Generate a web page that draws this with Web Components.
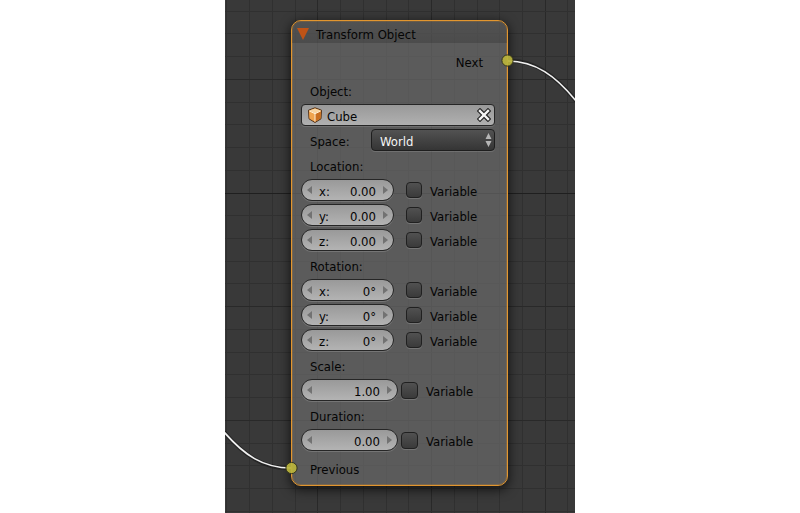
<!DOCTYPE html>
<html lang="en">
<head>
<meta charset="utf-8">
<title>Transform Object</title>
<style>
  html, body { margin: 0; background: #fff; }
  body { font: 13px/22px "DejaVu Sans Condensed", "DejaVu Sans", sans-serif; color: #050505; }
</style>
</head>
<body>
<node-editor>
  <node-panel heading="Transform Object">
    <node-socket side="right">Next</node-socket>
    <object-picker caption="Object:" value="Cube"></object-picker>
    <enum-field caption="Space:" options="World,Local"></enum-field>
    <field-group caption="Location:">
      <number-row axis="x:" value="0.00"></number-row>
      <number-row axis="y:" value="0.00"></number-row>
      <number-row axis="z:" value="0.00"></number-row>
    </field-group>
    <field-group caption="Rotation:">
      <number-row axis="x:" value="0°"></number-row>
      <number-row axis="y:" value="0°"></number-row>
      <number-row axis="z:" value="0°"></number-row>
    </field-group>
    <field-group caption="Scale:">
      <number-row wide name="Scale" value="1.00"></number-row>
    </field-group>
    <field-group caption="Duration:">
      <number-row wide name="Duration" value="0.00"></number-row>
    </field-group>
    <node-socket side="left">Previous</node-socket>
  </node-panel>
</node-editor>

<script>
const shared = `
  * { box-sizing: border-box; }
  button, input, select { font: inherit; color: inherit; margin: 0; padding: 0; border: 0; background: none; outline: none; min-width: 0; }
  .caption { display: block; padding: 2px 0 0 9px; height: 22px; }
`;

class Base extends HTMLElement {
  connectedCallback() {
    if (this.shadowRoot) return;
    this.attachShadow({ mode: 'open' }).innerHTML = `<style>${shared}</style>` + this.render();
  }
  attr(name) { return this.getAttribute(name) || ''; }
}

customElements.define('node-editor', class extends Base {
  render() {
    const xs = [1, 24, 47, 70, 92, 115, 138, 161, 183, 206, 229, 252, 274, 297, 320, 342];
    const ys = [11, 33, 56, 79, 102, 124, 147, 170, 193, 215, 238, 261, 283, 306, 329, 352, 374, 397, 420, 443, 465, 488, 511];
    const majorX = [92, 206, 320], majorY = [79, 306, 420];
    const col = (v, major) => major.includes(v) ? '#292929' : '#303030';
    const lines = xs.map(x => `<path stroke="${col(x, majorX)}" d="M${x}.5 0V600"/>`)
      .concat(ys.map(y => `<path stroke="${y === 193 ? '#1f1f1f' : col(y, majorY)}" d="M0 ${y}.5H350"/>`)).join('');
    return `<style>
      :host { display: block; position: relative; overflow: hidden; width: min(100%, 350px); min-height: 100vh; margin: 0 auto;
              padding: 20px 67px 27px 66px; box-sizing: border-box; background: #393939; }
      svg { position: absolute; inset: 0; width: 100%; height: 100%; pointer-events: none; }
    </style>
    <svg aria-hidden="true">${lines}</svg>
    <slot></slot>
    <svg aria-hidden="true" fill="none">
      <g stroke="#1c1c1c" stroke-width="4" stroke-opacity=".7"><path d="M287 61C310 61 331 76 351 101"/><path d="M-1 432C19 455 38 468 62 468"/></g>
      <g stroke="#f0f0f0" stroke-width="1.7"><path d="M283 61C310 61 331 76 351 101"/><path d="M-1 432C19 455 38 468 66 468"/></g>
      <g fill="#b9b43c" fill-opacity=".93" stroke="#34341c"><circle cx="282.5" cy="60.5" r="5.6"/><circle cx="66.5" cy="468" r="5.6"/></g>
    </svg>`;
  }
});

customElements.define('node-panel', class extends Base {
  render() {
    return `<style>
      :host { display: block; position: relative; border: 1px solid #e2962f; border-radius: 10px; background-clip: padding-box;
              background-color: rgba(105, 105, 105, .7);
              box-shadow: inset 0 0 0 1px rgba(216, 140, 40, .25), 0 3px 11px 1px rgba(0, 0, 0, .65); }
      header { display: flex; align-items: center; gap: 7px; height: 22px; padding: 4px 5px 0; border-radius: 9px 9px 0 0;
               background: linear-gradient(rgba(0,0,0,.1), rgba(0,0,0,.17)); }
      header button { display: flex; width: 12px; height: 12px; }
      h1 { margin: 0; padding-top: 1px; font: inherit; }
      main { display: flex; flex-direction: column; gap: 3px; padding: 9px 12px 4px 9px; }
    </style>
    <header>
      <button aria-label="Collapse"><svg width="12" height="12"><path d="M0 0H12L6 12Z" fill="#bf5316"/></svg></button>
      <h1>${this.attr('heading')}</h1>
    </header>
    <main><slot></slot></main>`;
  }
});

customElements.define('node-socket', class extends Base {
  render() {
    return `<style>
      :host { display: block; box-sizing: border-box; height: 24px; padding: 0 12px 0 9px; }
      :host([side="right"]) { text-align: right; }
      :host([side="left"]) { padding-top: 5px; height: 27px; }
    </style><slot></slot>`;
  }
});

customElements.define('object-picker', class extends Base {
  render() {
    return `<style>
      :host { display: flex; flex-direction: column; gap: 3px; }
      .box { display: flex; align-items: center; height: 22px; padding: 0 3px 0 5px; border: 1px solid #262626; border-radius: 4px;
             background: linear-gradient(#999, #b0b0b0); box-shadow: 0 1px 0 rgba(255,255,255,.13); }
      input { flex: 1; height: 20px; padding: 4px 0 0 4px; }
      button, svg { display: block; }
    </style>
    <label class="caption" for="object">${this.attr('caption')}</label>
    <div class="box">
      <svg width="16" height="16" viewBox="0 0 16 16" aria-hidden="true">
        <path d="M8 .8 14.5 3.2 14 11.8 8 15.5 2 11.8 1.5 3.2Z" fill="#e8943a" stroke="#51321a" stroke-linejoin="round"/>
        <path d="M2.3 3.6 8 1.5 13.7 3.6 8 6.5Z" fill="#f8d6a4"/>
        <path d="M2.1 4 7.8 6.8V14.6L2.6 11.5Z" fill="#f0a44e"/>
        <path d="M13.9 4 8.2 6.8V14.6L13.4 11.5Z" fill="#c96f20"/>
        <path d="M2.3 4 8 6.7 13.7 4M8 6.7V14.5" fill="none" stroke="#fff0d6"/>
      </svg>
      <input id="object" value="${this.attr('value')}">
      <button aria-label="Clear object"><svg width="14" height="14" viewBox="0 0 14 14" fill="none" stroke-linecap="square">
        <path d="M3 3 11 11M11 3 3 11" stroke="#252525" stroke-width="4.6"/>
        <path d="M3 3 11 11M11 3 3 11" stroke="#f5f5f5" stroke-width="2.4"/></svg></button>
    </div>`;
  }
});

customElements.define('enum-field', class extends Base {
  render() {
    return `<style>
      :host { display: grid; grid-template-columns: 70px 1fr; }
      .box { position: relative; }
      select { appearance: none; display: block; width: 100%; height: 22px; padding: 1px 16px 0 8px; border: 1px solid #1e1e1e; border-radius: 4px;
               color: #f4f4f4; background: linear-gradient(#525252, #353535); box-shadow: 0 1px 0 rgba(255,255,255,.13); }
      svg { position: absolute; right: 3px; top: 3px; pointer-events: none; }
    </style>
    <label class="caption" for="space">${this.attr('caption')}</label>
    <div class="box">
      <select id="space">${this.attr('options').split(',').map(o => `<option>${o}</option>`).join('')}</select>
      <svg width="7" height="16" fill="#b5b5b5" aria-hidden="true"><path d="M0.5 7 3.5 1 6.5 7ZM.5 9H6.5L3.5 15Z"/></svg>
    </div>`;
  }
});

customElements.define('field-group', class extends Base {
  render() {
    return `<style>
      :host { display: block; }
      div { display: flex; flex-direction: column; gap: 3px; }
    </style>
    <div role="group" aria-labelledby="cap"><span class="caption" id="cap">${this.attr('caption')}</span><slot></slot></div>`;
  }
});

customElements.define('number-row', class extends Base {
  render() {
    const axis = this.attr('axis');
    const label = axis ? `<label for="num">${axis}</label>` : '';
    const aria = axis ? '' : `aria-label="${this.attr('name')}"`;
    return `<style>
      :host { display: grid; grid-template-columns: 93px 1fr; gap: 12px; --check: 16px; }
      :host([wide]) { grid-template-columns: 97px 1fr; gap: 3px; --check: 17px; }
      label { line-height: 18px; }
      .pill { display: flex; align-items: center; height: 22px; padding: 0 5px; border: 1px solid #262626; border-radius: 11px;
              background: linear-gradient(#999, #b3b3b3); box-shadow: 0 1px 0 rgba(255,255,255,.16); }
      .pill label { padding: 4px 0 0 7px; }
      .pill input { flex: 1; width: 20px; height: 20px; padding: 4px 7px 0 0; text-align: right; }
      .pill button { flex: none; display: flex; }
      .var { display: flex; align-items: center; gap: 8px; height: 22px; }
      .var label { padding-top: 4px; }
      .var input { appearance: none; flex: none; width: var(--check); height: var(--check); border: 1px solid #202020; border-radius: 4px;
                   background: linear-gradient(#515151, #3a3a3a); box-shadow: 0 1px 0 rgba(255,255,255,.16); }
    </style>
    <div class="pill">
      <button aria-label="Decrease"><svg width="5" height="8"><path d="M5 0V8L0 4Z" fill="#727272"/></svg></button>
      ${label}
      <input id="num" ${aria} value="${this.attr('value')}">
      <button aria-label="Increase"><svg width="5" height="8"><path d="M0 0V8L5 4Z" fill="#727272"/></svg></button>
    </div>
    <div class="var"><input type="checkbox" id="var"><label for="var">Variable</label></div>`;
  }
});
</script>
</body>
</html>
